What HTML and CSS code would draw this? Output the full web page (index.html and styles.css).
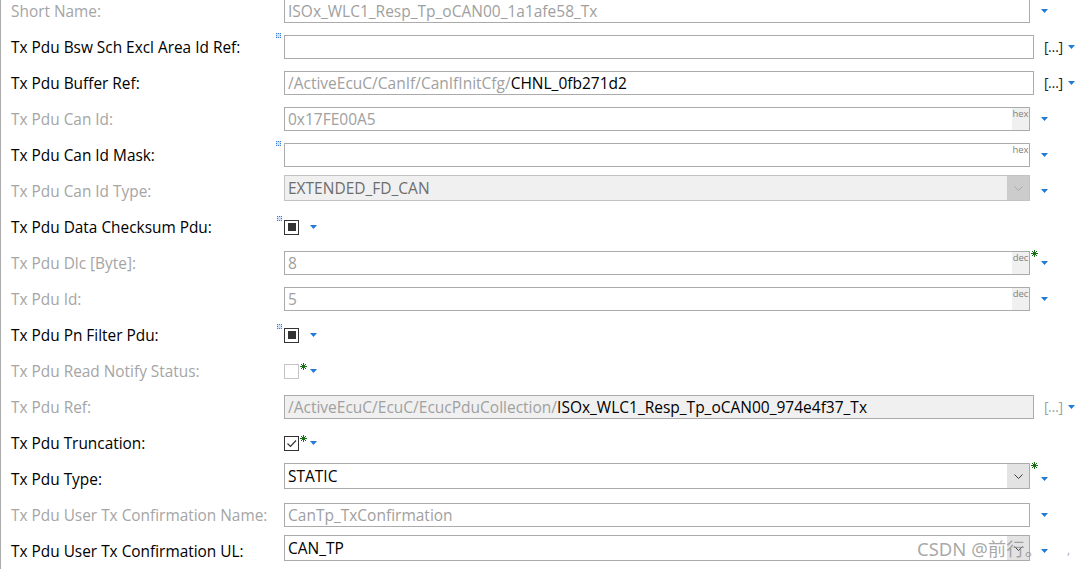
FILE: index.html
```html
<!DOCTYPE html>
<html>
<head>
<meta charset="utf-8">
<link rel="stylesheet" href="styles.css">
</head>
<body>
<div class="panel">
  <div class="form">
    <div class="row dis">
      <div class="label">Short Name:</div>
      <div class="ctl">
        <div class="box"><span>ISOx_WLC1_Resp_Tp_oCAN00_1a1afe58_Tx</span></div>
        <svg class="dd" width="7" height="4" viewBox="0 0 7 4"><polygon points="0,0 7,0 3.5,4"/></svg>
      </div>
    </div>
    <div class="row">
      <div class="label">Tx Pdu Bsw Sch Excl Area Id Ref:</div>
      <div class="ctl">
        <span class="mark"></span>
        <div class="box wide"></div>
        <span class="browse">[…]</span>
        <svg class="dd dd-near" width="7" height="4" viewBox="0 0 7 4"><polygon points="0,0 7,0 3.5,4"/></svg>
      </div>
    </div>
    <div class="row">
      <div class="label">Tx Pdu Buffer Ref:</div>
      <div class="ctl">
        <div class="box wide"><span>/ActiveEcuC/CanIf/CanIfInitCfg/</span><span class="val">CHNL_0fb271d2</span></div>
        <span class="browse">[…]</span>
        <svg class="dd dd-near" width="7" height="4" viewBox="0 0 7 4"><polygon points="0,0 7,0 3.5,4"/></svg>
      </div>
    </div>
    <div class="row dis">
      <div class="label">Tx Pdu Can Id:</div>
      <div class="ctl">
        <div class="box"><span>0x17FE00A5</span><span class="unit shaded">hex</span></div>
        <svg class="dd" width="7" height="4" viewBox="0 0 7 4"><polygon points="0,0 7,0 3.5,4"/></svg>
      </div>
    </div>
    <div class="row">
      <div class="label">Tx Pdu Can Id Mask:</div>
      <div class="ctl">
        <span class="mark"></span>
        <div class="box"><span class="unit">hex</span></div>
        <svg class="dd" width="7" height="4" viewBox="0 0 7 4"><polygon points="0,0 7,0 3.5,4"/></svg>
      </div>
    </div>
    <div class="row dis">
      <div class="label">Tx Pdu Can Id Type:</div>
      <div class="ctl">
        <div class="combo off"><span class="ctext">EXTENDED_FD_CAN</span><span class="cbtn"><svg width="9" height="5" viewBox="0 0 9 5"><polyline points="0.5,0.5 4.5,4.5 8.5,0.5"/></svg></span></div>
        <svg class="dd" width="7" height="4" viewBox="0 0 7 4"><polygon points="0,0 7,0 3.5,4"/></svg>
      </div>
    </div>
    <div class="row">
      <div class="label">Tx Pdu Data Checksum Pdu:</div>
      <div class="ctl">
        <span class="mark cbmark"></span>
        <span class="cb on"><span class="fill"></span></span>
        <svg class="dd" width="7" height="4" viewBox="0 0 7 4"><polygon points="0,0 7,0 3.5,4"/></svg>
      </div>
    </div>
    <div class="row dis">
      <div class="label">Tx Pdu Dlc [Byte]:</div>
      <div class="ctl">
        <div class="box"><span>8</span><span class="unit shaded">dec</span></div>
        <svg class="ast" width="7" height="7" viewBox="0 0 7 7"><path d="M3.5 0V7M0 3.5H7M1 1L6 6M6 1L1 6"/></svg>
        <svg class="dd dd-ast" width="7" height="4" viewBox="0 0 7 4"><polygon points="0,0 7,0 3.5,4"/></svg>
      </div>
    </div>
    <div class="row dis">
      <div class="label">Tx Pdu Id:</div>
      <div class="ctl">
        <div class="box"><span>5</span><span class="unit shaded">dec</span></div>
        <svg class="dd" width="7" height="4" viewBox="0 0 7 4"><polygon points="0,0 7,0 3.5,4"/></svg>
      </div>
    </div>
    <div class="row">
      <div class="label">Tx Pdu Pn Filter Pdu:</div>
      <div class="ctl">
        <span class="mark cbmark"></span>
        <span class="cb on"><span class="fill"></span></span>
        <svg class="dd" width="7" height="4" viewBox="0 0 7 4"><polygon points="0,0 7,0 3.5,4"/></svg>
      </div>
    </div>
    <div class="row dis">
      <div class="label">Tx Pdu Read Notify Status:</div>
      <div class="ctl">
        <span class="cb off"></span>
        <svg class="ast" width="7" height="7" viewBox="0 0 7 7"><path d="M3.5 0V7M0 3.5H7M1 1L6 6M6 1L1 6"/></svg>
        <svg class="dd dd-ast" width="7" height="4" viewBox="0 0 7 4"><polygon points="0,0 7,0 3.5,4"/></svg>
      </div>
    </div>
    <div class="row dis">
      <div class="label">Tx Pdu Ref:</div>
      <div class="ctl">
        <div class="box wide ro"><span>/ActiveEcuC/EcuC/EcucPduCollection/</span><span class="val">ISOx_WLC1_Resp_Tp_oCAN00_974e4f37_Tx</span></div>
        <span class="browse off">[…]</span>
        <svg class="dd dd-near" width="7" height="4" viewBox="0 0 7 4"><polygon points="0,0 7,0 3.5,4"/></svg>
      </div>
    </div>
    <div class="row">
      <div class="label">Tx Pdu Truncation:</div>
      <div class="ctl">
        <span class="cb on"><svg width="13" height="13" viewBox="0 0 13 13"><polyline points="2.5,6.5 5.5,9.5 11,3.5"/></svg></span>
        <svg class="ast" width="7" height="7" viewBox="0 0 7 7"><path d="M3.5 0V7M0 3.5H7M1 1L6 6M6 1L1 6"/></svg>
        <svg class="dd dd-ast" width="7" height="4" viewBox="0 0 7 4"><polygon points="0,0 7,0 3.5,4"/></svg>
      </div>
    </div>
    <div class="row">
      <div class="label">Tx Pdu Type:</div>
      <div class="ctl">
        <div class="combo"><span class="ctext">STATIC</span><span class="cbtn"><svg width="9" height="5" viewBox="0 0 9 5"><polyline points="0.5,0.5 4.5,4.5 8.5,0.5"/></svg></span></div>
        <svg class="ast" width="7" height="7" viewBox="0 0 7 7"><path d="M3.5 0V7M0 3.5H7M1 1L6 6M6 1L1 6"/></svg>
        <svg class="dd dd-ast" width="7" height="4" viewBox="0 0 7 4"><polygon points="0,0 7,0 3.5,4"/></svg>
      </div>
    </div>
    <div class="row dis">
      <div class="label">Tx Pdu User Tx Confirmation Name:</div>
      <div class="ctl">
        <div class="box"><span>CanTp_TxConfirmation</span></div>
        <svg class="dd" width="7" height="4" viewBox="0 0 7 4"><polygon points="0,0 7,0 3.5,4"/></svg>
      </div>
    </div>
    <div class="row">
      <div class="label">Tx Pdu User Tx Confirmation UL:</div>
      <div class="ctl">
        <div class="combo"><span class="ctext">CAN_TP</span><span class="cbtn"><svg width="9" height="5" viewBox="0 0 9 5"><polyline points="0.5,0.5 4.5,4.5 8.5,0.5"/></svg></span></div>
        <svg class="dd" width="7" height="4" viewBox="0 0 7 4"><polygon points="0,0 7,0 3.5,4"/></svg>
      </div>
    </div>
  </div>
  <div class="watermark">CSDN @前行。</div>
  <div class="comma">,</div>
</div>
</body>
</html>
```

FILE: styles.css
```css
html, body {
  margin: 0;
  padding: 0;
  background: #ffffff;
}

body {
  font-family: "Open Sans", "Noto Sans CJK SC", sans-serif;
  font-size: 15.5px;
  color: #000000;
  overflow: hidden;
}

.panel {
  position: relative;
  height: 569px;
  border-left: 1px solid #ababab;
  overflow: hidden;
}

.form {
  margin-top: -7px;
}

.row {
  display: flex;
  align-items: center;
  height: 36px;
}

.label {
  flex: none;
  width: 283px;
  padding-left: 10px;
  box-sizing: border-box;
  white-space: nowrap;
  font-size: 15.4px;
  padding-top: 1px;
  color: #000000;
}

.row.dis .label {
  color: #a5a5a5;
}

.ctl {
  position: relative;
  display: flex;
  align-items: center;
}

.box {
  flex: none;
  width: 746px;
  height: 24px;
  box-sizing: border-box;
  border: 1px solid #ababab;
  background: #ffffff;
  padding-left: 3px;
  display: flex;
  align-items: center;
  color: #a0a0a0;
  white-space: nowrap;
}

.box.wide {
  width: 750px;
}

.box.ro {
  background: #f0f0f0;
}

.val {
  color: #000000;
}

.unit {
  margin-left: auto;
  align-self: stretch;
  width: 17px;
  padding-top: 1px;
  box-sizing: border-box;
  font-size: 9.5px;
  line-height: 10px;
  color: #808080;
  text-align: center;
}

.unit.shaded {
  background: #f0f0f0;
}

.mark {
  position: absolute;
  left: -8px;
  top: -2px;
  width: 3px;
  height: 3px;
  border: 1px dotted #3b7fd4;
  background: #cfe2f8;
}

.mark.cbmark {
  left: -7px;
  top: -4px;
}

.dd {
  flex: none;
  margin-left: 11px;
  fill: #1f7bd6;
}

.dd-near {
  margin-left: 5px;
}

.dd-ast {
  margin-left: 3px;
}

.browse {
  flex: none;
  margin-left: 10px;
  font-size: 14px;
  line-height: 16px;
  color: #222222;
  letter-spacing: -0.5px;
}

.browse.off {
  color: #a0a0a0;
}

.ast {
  flex: none;
  align-self: flex-start;
  margin-top: -1px;
  margin-left: 1px;
  stroke: #157015;
  stroke-width: 1;
}

.combo {
  flex: none;
  width: 746px;
  height: 26px;
  margin-bottom: 6px;
  box-sizing: border-box;
  border: 1px solid #ababab;
  background: #ffffff;
  display: flex;
  align-items: stretch;
}

.ctext {
  flex: 1;
  padding-left: 3px;
  display: flex;
  align-items: center;
  color: #000000;
}

.cbtn {
  flex: none;
  width: 22px;
  background: #e3e3e3;
  display: flex;
  align-items: center;
  justify-content: center;
}

.cbtn svg {
  fill: none;
  stroke: #3c3c3c;
  stroke-width: 1;
}

.combo.off {
  border-color: #c3c3c3;
  background: #f0f0f0;
}

.combo.off .ctext {
  color: #6d6d6d;
}

.combo.off .cbtn {
  background: #cccccc;
}

.combo.off .cbtn svg {
  stroke: #a8a8a8;
}

.cb {
  flex: none;
  width: 15px;
  height: 15px;
  box-sizing: border-box;
  border: 1px solid #333333;
  background: #ffffff;
  display: flex;
  align-items: center;
  justify-content: center;
}

.cb.off {
  border-color: #c4c4c4;
}

.cb .fill {
  width: 8px;
  height: 8px;
  background: #333333;
}

.cb svg {
  fill: none;
  stroke: #333333;
  stroke-width: 1.2;
}

.watermark {
  position: absolute;
  left: 916px;
  top: 535px;
  font-family: "Noto Sans", "Noto Sans CJK SC", sans-serif;
  font-size: 18.5px;
  color: rgba(140, 140, 140, 0.75);
  white-space: nowrap;
}

.comma {
  position: absolute;
  left: 1066px;
  top: 541px;
  font-size: 12px;
  color: rgba(140, 140, 140, 0.75);
}
```
